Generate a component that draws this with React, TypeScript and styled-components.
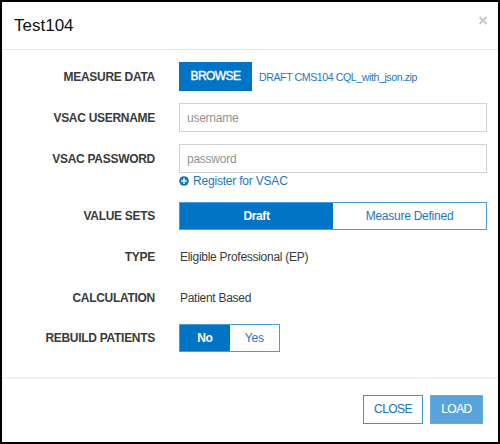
import React from "react";
import styled, { createGlobalStyle } from "styled-components";

const GlobalStyle = createGlobalStyle`
  * { box-sizing: border-box; }
  body { margin: 0; background: #fff; }
  button, input { font-family: inherit; letter-spacing: inherit; }
`;

const Dialog = styled.div`
  width: 500px;
  height: 444px;
  border: 2px solid #000;
  background: #fff;
  color: #3a3a3a;
  font-family: "Liberation Sans", Arial, sans-serif;
  font-size: 12px;
  letter-spacing: -0.25px;
  display: flex;
  flex-direction: column;
`;

const Header = styled.header`
  height: 48px;
  flex: none;
  border-bottom: 1px solid #e5e5e5;
  padding: 0 10px 0 12px;
  display: flex;
  justify-content: space-between;
`;

const Title = styled.h1`
  margin: 13px 0 0;
  font-size: 17px;
  letter-spacing: 0;
  line-height: 21px;
  font-weight: 400;
  color: #111;
`;

const Dismiss = styled.button`
  border: 0;
  padding: 0;
  margin-top: 13px;
  width: 10px;
  height: 10px;
  background: none;
  display: flex;
`;

const Form = styled.form`
  flex: 1;
  padding-top: 12px;
`;

const Row = styled.div<{ $height?: number }>`
  display: grid;
  grid-template-columns: 153px 308px;
  column-gap: 24px;
  height: ${(p) => p.$height ?? 41}px;
  align-items: start;
`;

const Label = styled.label<{ $compact?: boolean }>`
  line-height: 29px;
  padding-top: ${(p) => (p.$compact ? 0 : 1)}px;
  letter-spacing: -0.29px;
  font-weight: 700;
  text-align: right;
  white-space: nowrap;
`;

const Value = styled.span`
  line-height: 29px;
  padding: 1px 0 0 1px;
  letter-spacing: -0.28px;
`;

const FilePicker = styled.div`
  display: flex;
  align-items: center;
  gap: 7px;
`;

const Button = styled.button<{ $variant: "primary" | "outline" | "muted"; $width: number }>`
  width: ${(p) => p.$width}px;
  height: 29px;
  padding: 0;
  font-size: 12px;
  letter-spacing: -0.55px;
  line-height: 27px;
  border: 1px solid ${(p) => ({ primary: "#0871bf", outline: "#3b93d1", muted: "#65addf" })[p.$variant]};
  background: ${(p) => ({ primary: "#0274c6", outline: "#fff", muted: "#57a4da" })[p.$variant]};
  color: ${(p) => (p.$variant === "outline" ? "#1d75c2" : "#fff")};
  -webkit-text-stroke: ${(p) => (p.$variant === "primary" ? "0.35px #fff" : "0.1px currentColor")};
`;

const FileName = styled.span`
  font-size: 10.6px;
  letter-spacing: -0.42px;
  line-height: 12px;
  color: #2577be;
  white-space: nowrap;
`;

const Input = styled.input`
  display: block;
  width: 308px;
  height: 29px;
  padding: 0 7px;
  border: 1px solid #d2d2d2;
  border-radius: 0;
  background: #fff;
  font-size: 12px;
  &::placeholder { color: #929292; opacity: 1; }
`;

const RegisterLink = styled.a`
  display: flex;
  align-items: center;
  gap: 4px;
  height: 16px;
  letter-spacing: -0.2px;
  color: #1d75c2;
`;

const Segmented = styled.div<{ $width: number }>`
  display: flex;
  width: ${(p) => p.$width}px;
  height: 28px;
  border: 1px solid #4a9cd6;
`;

const Segment = styled.button<{ $active?: boolean }>`
  flex: 1;
  border: 0;
  padding: 0 0 1px;
  font-size: 12px;
  letter-spacing: ${(p) => (p.$active ? -0.4 : -0.25)}px;
  font-weight: ${(p) => (p.$active ? 700 : 400)};
  color: ${(p) => (p.$active ? "#fff" : "#1d75c2")};
  background: ${(p) => (p.$active ? "#0274c6" : "#fff")};
`;

const Footer = styled.footer`
  height: 65px;
  flex: none;
  border-top: 2px solid #f1f1f1;
  padding: 16px 15px 0 0;
  display: flex;
  justify-content: flex-end;
  gap: 7px;
`;

export default function App() {
  return (
    <>
      <GlobalStyle />
      <Dialog role="dialog" aria-label="Test104">
        <Header>
          <Title>Test104</Title>
          <Dismiss aria-label="Close">
            <svg width="10" height="10" viewBox="0 0 10 10">
              <path d="M1.6 2 8.6 9M8.6 2 1.6 9" stroke="#c8c8c8" strokeWidth="2" />
            </svg>
          </Dismiss>
        </Header>
        <Form>
          <Row>
            <Label>MEASURE DATA</Label>
            <FilePicker>
              <Button type="button" $variant="primary" $width={73}>BROWSE</Button>
              <FileName>DRAFT CMS104 CQL_with_json.zip</FileName>
            </FilePicker>
          </Row>
          <Row>
            <Label htmlFor="username">VSAC USERNAME</Label>
            <Input id="username" placeholder="username" />
          </Row>
          <Row $height={58}>
            <Label htmlFor="password">VSAC PASSWORD</Label>
            <div>
              <Input id="password" type="text" placeholder="password" />
              <RegisterLink>
                <svg width="10" height="10" viewBox="0 0 10 10">
                  <circle cx="5" cy="5" r="4.8" fill="#0b76c7" />
                  <path d="M5 2.2V7.8M2.2 5H7.8" stroke="#fff" strokeWidth="1.7" />
                </svg>
                Register for VSAC
              </RegisterLink>
            </div>
          </Row>
          <Row $height={40}>
            <Label $compact>VALUE SETS</Label>
            <Segmented $width={308}>
              <Segment type="button" $active>Draft</Segment>
              <Segment type="button">Measure Defined</Segment>
            </Segmented>
          </Row>
          <Row>
            <Label>TYPE</Label>
            <Value>Eligible Professional (EP)</Value>
          </Row>
          <Row>
            <Label>CALCULATION</Label>
            <Value>Patient Based</Value>
          </Row>
          <Row>
            <Label $compact>REBUILD PATIENTS</Label>
            <Segmented $width={101}>
              <Segment type="button" $active>No</Segment>
              <Segment type="button">Yes</Segment>
            </Segmented>
          </Row>
        </Form>
        <Footer>
          <Button $variant="outline" $width={60}>CLOSE</Button>
          <Button $variant="muted" $width={53}>LOAD</Button>
        </Footer>
      </Dialog>
    </>
  );
}
